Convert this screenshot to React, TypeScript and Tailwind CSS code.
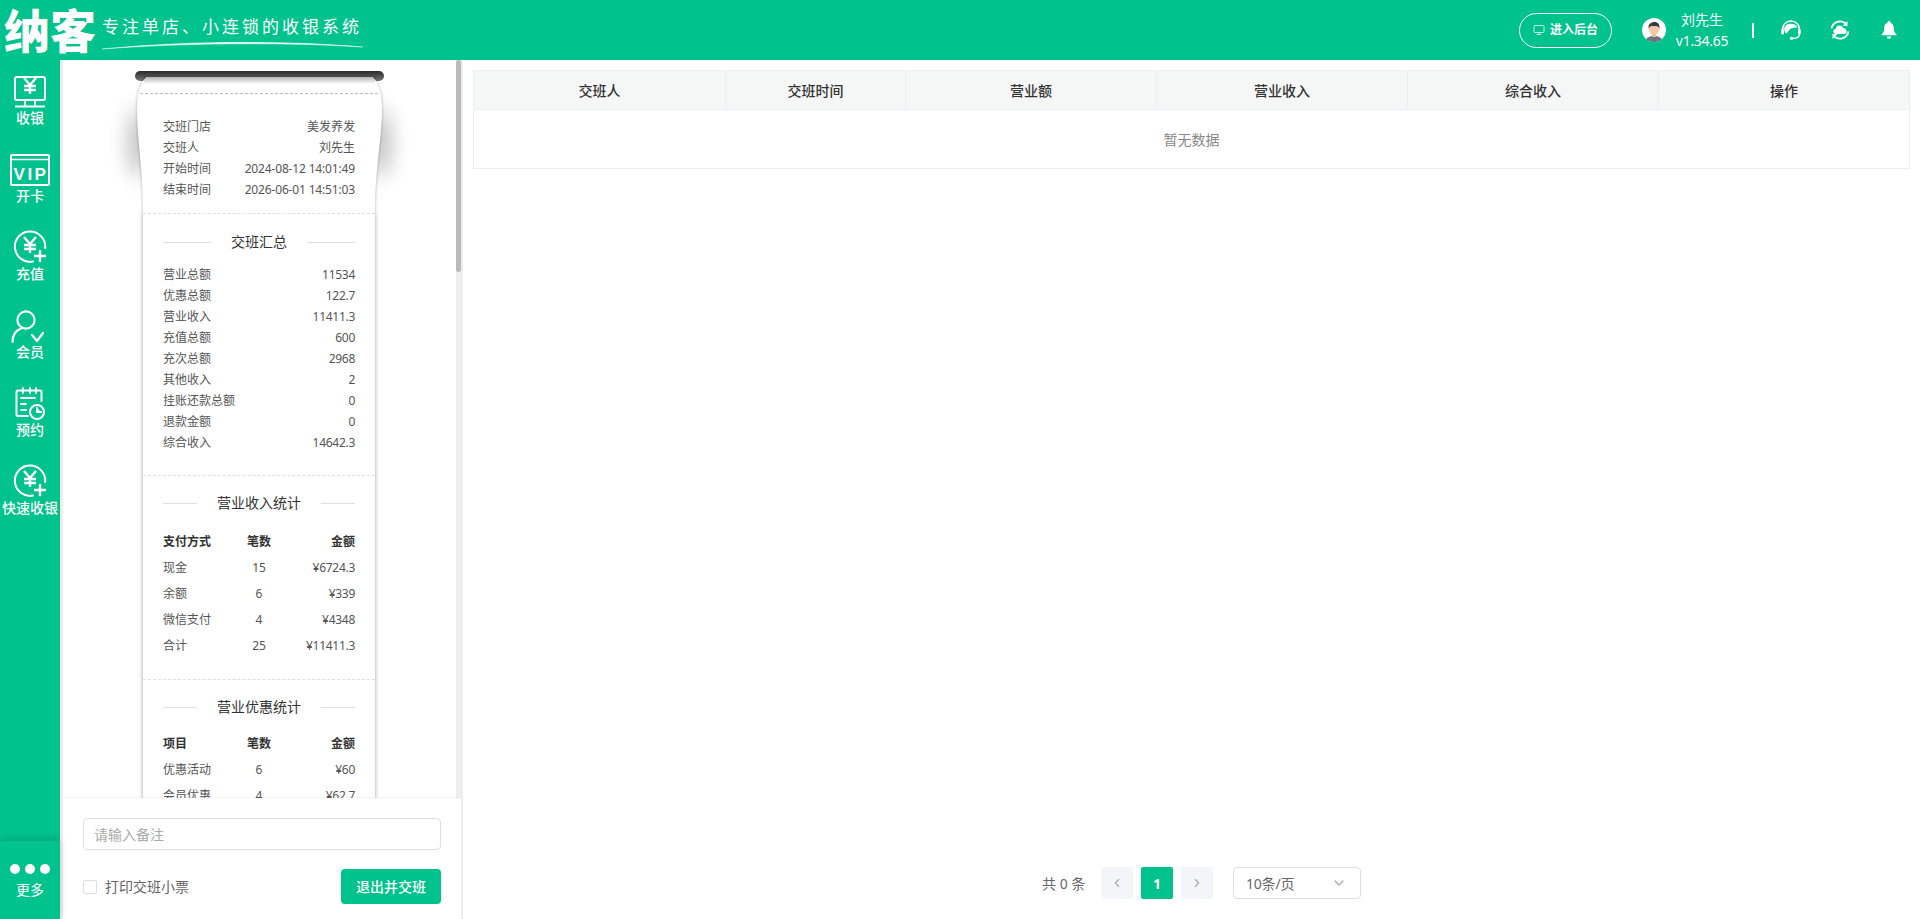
import React from "react";
import { ChevronDown, ChevronLeft, ChevronRight, Monitor } from "lucide-react";

const S = { fill: "none", stroke: "#fff", strokeWidth: 2, strokeLinecap: "round" as const, strokeLinejoin: "round" as const };

function Yen({ cx, cy }: { cx: number; cy: number }) {
  return (
    <path
      {...S}
      strokeWidth={2.4}
      strokeLinecap="butt"
      d={`M${cx - 6} ${cy - 8}L${cx} ${cy - 1}L${cx + 6} ${cy - 8}M${cx} ${cy - 1}V${cy + 8}M${cx - 6} ${cy}H${cx + 6}M${cx - 6} ${cy + 4}H${cx + 6}`}
    />
  );
}

function IcoCash() {
  return (
    <svg width="60" height="36" viewBox="0 0 60 36">
      <rect x="15" y="3" width="30" height="23" rx="2" {...S} />
      <g transform="translate(0 -1)"><Yen cx={30} cy={13} /></g>
      <path {...S} strokeLinecap="butt" d="M25 26v6M35 26v6M15 32.500h30" />
    </svg>
  );
}
function IcoVip() {
  return (
    <svg width="60" height="36" viewBox="0 0 60 36">
      <rect x="11" y="3" width="38" height="30" rx="1" {...S} />
      <path {...S} d="M11 7.500h38" strokeWidth={1.6} />
      <text x="31" y="27.500" textAnchor="middle" fill="#fff" fontSize="17" fontWeight="700" letterSpacing="2.500" fontFamily="Liberation Sans, sans-serif">VIP</text>
    </svg>
  );
}
function IcoCharge() {
  return (
    <svg width="60" height="36" viewBox="0 0 60 36">
      <path {...S} d="M33 31.600A15.200 15.200 0 1 1 45.200 18" />
      <Yen cx={30} cy={15} />
      <path {...S} strokeWidth={2.4} strokeLinecap="butt" d="M34 26h12M40 20v12" />
    </svg>
  );
}
function IcoMember() {
  return (
    <svg width="60" height="36" viewBox="0 0 60 36">
      <circle cx="26" cy="12" r="8.600" {...S} strokeWidth={2.2} />
      <path {...S} strokeWidth={2.2} d="M12.500 34c0-7 3.500-11.500 8.500-13.500" />
      <path {...S} strokeWidth={2.2} d="M32 27l5 6 6-8" />
    </svg>
  );
}
function IcoBook() {
  return (
    <svg width="60" height="36" viewBox="0 0 60 36">
      <path {...S} d="M28 30H18a1.500 1.500 0 0 1-1.500-1.500V6a1.500 1.500 0 0 1 1.500-1.500h22A1.500 1.500 0 0 1 41.500 6v9" />
      <path {...S} d="M23 2v5M30 2v5M36 2v5M21 12h14M21 18h5M21 24h5" strokeWidth={1.8} />
      <circle cx="37" cy="26" r="7" {...S} />
      <path {...S} fill="#fff" d="M37 22v4h4" />
    </svg>
  );
}

function Item({ icon, label }: { icon: React.ReactNode; label: string }) {
  return (
    <div className="flex h-[78px] flex-col items-center text-white">
      <div className="h-[34px] w-[60px]">{icon}</div>
      <div className="h-5 whitespace-nowrap text-center text-[14px] leading-5 font-medium">{label}</div>
    </div>
  );
}

const isNum = (s: string) => /^[\d¥.\-: ]+$/.test(s);

function InfoRow({ a, b }: { a: string; b: string }) {
  const tracking = !isNum(b) ? "" : b.length > 10 ? "tracking-[-0.16px]" : "tracking-[-0.28px]";
  return (
    <div className="flex h-[21px] items-center justify-between text-[12px] leading-[21px] text-[#555]">
      <span>{a}</span>
      <span className={tracking}>{b}</span>
    </div>
  );
}

function Title({ children }: { children: string }) {
  return (
    <div className="flex h-5 items-center gap-5">
      <div className="h-px flex-1 bg-[#dcdee2]" />
      <div className="text-[14px] leading-5 text-[#333]">{children}</div>
      <div className="h-px flex-1 bg-[#dcdee2]" />
    </div>
  );
}

function StatRow({ c, head }: { c: [string, string, string]; head?: boolean }) {
  return (
    <div className={`grid h-[26px] grid-cols-3 items-center text-[12px] ${head ? "font-bold text-[#333]" : "text-[#555]"}`}>
      <span>{c[0]}</span>
      <span className="text-center">{c[1]}</span>
      <span className={isNum(c[2]) ? "text-right tracking-[-0.28px]" : "text-right"}>{c[2]}</span>
    </div>
  );
}

const summary: [string, string][] = [
  ["营业总额", "11534"],
  ["优惠总额", "122.7"],
  ["营业收入", "11411.3"],
  ["充值总额", "600"],
  ["充次总额", "2968"],
  ["其他收入", "2"],
  ["挂账还款总额", "0"],
  ["退款金额", "0"],
  ["综合收入", "14642.3"],
];

function PaperTop() {
  const shape = "M11 0C4 8 2 18 2 32C2 62 8 92 8 136H240C240 92 247 62 247 32C247 18 245 8 238 0Z";
  return (
    <svg className="absolute left-0 top-0 overflow-visible" width="249" height="136" viewBox="0 0 249 136">
      <defs>
        <filter id="blur" filterUnits="userSpaceOnUse" x="-70" y="-30" width="390" height="220">
          <feGaussianBlur stdDeviation="11" />
        </filter>
        <filter id="edge" filterUnits="userSpaceOnUse" x="-20" y="-10" width="290" height="160">
          <feGaussianBlur stdDeviation="1.600" />
        </filter>
        <clipPath id="topclip">
          <rect x="-30" y="-10" width="310" height="146" />
        </clipPath>
        <linearGradient id="under" x1="0" y1="0" x2="0" y2="1">
          <stop offset="0" stopColor="#000" stopOpacity="0.3" />
          <stop offset="1" stopColor="#000" stopOpacity="0" />
        </linearGradient>
      </defs>
      <ellipse cx="4" cy="66" rx="7" ry="34" fill="#000" opacity="0.4" filter="url(#blur)" />
      <ellipse cx="245" cy="66" rx="7" ry="34" fill="#000" opacity="0.4" filter="url(#blur)" />
      <g clipPath="url(#topclip)">
        <path d={shape} fill="#000" opacity="0.32" filter="url(#edge)" />
      </g>
      <path d={shape} fill="#fff" />
      <rect x="9" y="0" width="231" height="7" fill="url(#under)" />
      <path d="M5 16.500H245" stroke="#bbb" strokeWidth="1" strokeDasharray="3 2" />
    </svg>
  );
}

function Receipt() {
  return (
    <div className="relative ml-[72px] w-[249px]">
      <div className="relative z-20 h-[10px] w-[249px] rounded-full bg-gradient-to-b from-[#2a2a2a] to-[#777]" />
      <div className="relative z-30 -mt-[4px] h-[136px]">
        <PaperTop />
        <div className="relative ml-[28px] w-[192px] pt-[39px]">
          <InfoRow a="交班门店" b="美发养发" />
          <InfoRow a="交班人" b="刘先生" />
          <InfoRow a="开始时间" b="2024-08-12 14:01:49" />
          <InfoRow a="结束时间" b="2026-06-01 14:51:03" />
        </div>
      </div>
      <div className="relative z-0 ml-2 w-[232px] bg-white shadow-[0_0_4px_rgba(0,0,0,0.4)]">
        <div className="border-t border-dashed border-[#dcdee2] px-5 pb-[22px] pt-[18px]">
          <Title>交班汇总</Title>
          <div className="mt-3">
            {summary.map(([a, b]) => (
              <InfoRow key={a} a={a} b={b} />
            ))}
          </div>
        </div>
        <div className="border-t border-dashed border-[#dcdee2] px-5 pb-5 pt-[17px]">
          <Title>营业收入统计</Title>
          <div className="mt-4">
            <StatRow head c={["支付方式", "笔数", "金额"]} />
            <StatRow c={["现金", "15", "¥6724.3"]} />
            <StatRow c={["余额", "6", "¥339"]} />
            <StatRow c={["微信支付", "4", "¥4348"]} />
            <StatRow c={["合计", "25", "¥11411.3"]} />
          </div>
        </div>
        <div className="border-t border-dashed border-[#dcdee2] px-5 pb-5 pt-[17px]">
          <Title>营业优惠统计</Title>
          <div className="mt-[14px]">
            <StatRow head c={["项目", "笔数", "金额"]} />
            <StatRow c={["优惠活动", "6", "¥60"]} />
            <StatRow c={["会员优惠", "4", "¥62.7"]} />
          </div>
        </div>
      </div>
    </div>
  );
}

function Avatar() {
  return (
    <svg width="24" height="24" viewBox="0 0 24 24">
      <defs>
        <clipPath id="av"><circle cx="12" cy="12" r="12" /></clipPath>
      </defs>
      <circle cx="12" cy="12" r="12" fill="#fff" />
      <g clipPath="url(#av)">
        <path d="M3 25c0-5 4-7 9-7s9 2 9 7z" fill="#6b7280" />
        <rect x="10" y="14" width="4" height="5" fill="#eab796" />
        <ellipse cx="12" cy="11" rx="5" ry="6" fill="#f3c6a5" />
        <path d="M6.500 11C6 6 9 4 12.500 4S18 6.500 17.500 11C17 8.500 15.500 8 12 8S7 8.500 6.500 11z" fill="#3a3a3a" />
      </g>
    </svg>
  );
}
function Headset() {
  return (
    <svg width="20" height="20" viewBox="0 0 20 20" fill="#fff">
      <path d="M1.500 9.500a8.500 8.500 0 0 1 17 0" fill="none" stroke="#fff" strokeWidth="1.600" />
      <path d="M3.200 8.500C4 5.200 7 3.800 10 3.800s5.600 1.300 6.400 4C14 7.200 11 8 8.800 9.500 7.500 10.500 6.500 13 5.500 13.500 3.800 13 3 10.500 3.200 8.500z" />
      <rect x="0.300" y="9" width="2.700" height="5.500" rx="1.300" />
      <rect x="17" y="9" width="2.700" height="5.500" rx="1.300" />
      <path d="M18.500 14c0 2.800-3 4.500-7 4.500" fill="none" stroke="#fff" strokeWidth="1.400" />
      <circle cx="10.500" cy="18.300" r="1.600" />
    </svg>
  );
}
function CloudSync() {
  return (
    <svg width="20" height="20" viewBox="0 0 20 20">
      <path d="M1.500 8.500A8.800 8.800 0 0 1 15.500 3.200" fill="none" stroke="#fff" strokeWidth="1.800" />
      <path d="M18.500 11.500A8.800 8.800 0 0 1 4.500 16.800" fill="none" stroke="#fff" strokeWidth="1.800" />
      <path d="M17.500 1v5h-5zM2.500 19v-5h5z" fill="#fff" />
      <path d="M6 14a2.500 2.500 0 0 1-.3-5 4 4 0 0 1 7.700-.800A2.900 2.900 0 0 1 14 14z" fill="#fff" />
    </svg>
  );
}
function Bell() {
  return (
    <svg width="16" height="18" viewBox="0 0 16 18" fill="#fff">
      <circle cx="8" cy="1.500" r="1.400" />
      <path d="M8 1.500c3.300 0 4.800 2.500 4.800 5.500 0 3.200.7 4.800 2.700 6.500v.8H.5v-.8C2.500 11.800 3.200 10.200 3.200 7c0-3 1.500-5.500 4.800-5.500z" />
      <path d="M5.800 15.500h4.400a2.200 2.200 0 0 1-4.400 0z" />
    </svg>
  );
}

const cols = ["交班人", "交班时间", "营业额", "营业收入", "综合收入", "操作"];

export default function App() {
  return (
    <div className="flex h-[919px] w-[1920px] flex-col overflow-hidden bg-white font-[Noto_Sans,Noto_Sans_CJK_SC,sans-serif]">
      <header className="flex h-[60px] shrink-0 items-center bg-[#00c28c] text-white">
        <span className="ml-[4px] w-[98px] whitespace-nowrap text-[46px] leading-none font-black">纳客</span>
        <div className="relative h-[60px] w-[262px]">
          <div className="whitespace-nowrap pt-[15px] text-[17px] leading-6 tracking-[3px]">专注单店、小连锁的收银系统</div>
          <svg className="absolute left-0 top-[38px]" width="262" height="12" viewBox="0 0 262 12">
            <path d="M0 11C80 3 180 2 261 9C180 4 80 5 0 11Z" fill="#fff" stroke="#fff" strokeWidth="0.400" />
          </svg>
        </div>
        <div className="ml-auto flex items-center">
          <div className="flex h-[35px] w-[93px] items-center justify-center gap-[5px] rounded-full border border-white text-[12px] font-bold">
            <Monitor size={12} strokeWidth={1.5} />
            <span>进入后台</span>
          </div>
          <div className="ml-[30px]"><Avatar /></div>
          <div className="ml-[6px] flex w-[60px] flex-col items-center text-[14px] leading-[21px]">
            <span>刘先生</span>
            <span className="whitespace-nowrap tracking-[-0.3px]">v1.34.65</span>
          </div>
          <div className="ml-5 h-[15px] w-[2px] bg-white" />
          <div className="ml-[27px]"><Headset /></div>
          <div className="ml-[29px]"><CloudSync /></div>
          <div className="ml-[31px] mr-[23px]"><Bell /></div>
        </div>
      </header>
      <div className="flex min-h-0 flex-1">
        <aside className="flex w-[60px] shrink-0 flex-col justify-between bg-[#00c28c]">
          <div className="pt-[14px]">
            <Item icon={<IcoCash />} label="收银" />
            <Item icon={<IcoVip />} label="开卡" />
            <Item icon={<IcoCharge />} label="充值" />
            <Item icon={<IcoMember />} label="会员" />
            <Item icon={<IcoBook />} label="预约" />
            <Item icon={<IcoCharge />} label="快速收银" />
          </div>
          <div className="relative z-30 flex h-[78px] flex-col items-center bg-[#00c28c] pt-[23px] text-white shadow-[0_-1px_8px_rgba(0,0,0,0.18)]">
            <div className="flex gap-[5px]">
              <span className="h-[10px] w-[10px] rounded-full bg-white" />
              <span className="h-[10px] w-[10px] rounded-full bg-white" />
              <span className="h-[10px] w-[10px] rounded-full bg-white" />
            </div>
            <div className="mt-[6px] text-[14px] leading-5">更多</div>
          </div>
        </aside>
        <section className="flex w-[403px] shrink-0 flex-col border-l-[3px] border-r-2 border-[#eeeeee]">
          <div className="flex min-h-0 flex-1">
            <div className="min-w-0 flex-1 overflow-hidden pt-[11px]">
              <Receipt />
            </div>
            <div className="w-[5px] shrink-0 bg-[#eeeeee]">
              <div className="h-[212px] rounded-full bg-[#bbbbbb]" />
            </div>
          </div>
          <div className="relative z-10 h-[121px] shrink-0 bg-white px-5 pt-5 shadow-[0_-1px_1px_rgba(0,0,0,0.04)]">
            <div className="flex h-8 items-center rounded border border-[#dcdee2] px-[10px] text-[14px] text-[#aaaaaa]">请输入备注</div>
            <div className="mt-[19px] flex h-[35px] items-center justify-between">
              <div className="flex items-center gap-2">
                <span className="h-[14px] w-[14px] rounded-[2px] border border-[#dcdee2]" />
                <span className="text-[14px] text-[#666]">打印交班小票</span>
              </div>
              <div className="flex h-[35px] w-[100px] items-center justify-center rounded bg-[#00c28c] text-[14px] font-medium text-white">退出并交班</div>
            </div>
          </div>
        </section>
        <main className="flex min-w-0 flex-1 flex-col px-[10px] pb-5 pt-[10px]">
          <div className="border border-[#ebeef5]">
            <div className="grid h-[39px] grid-cols-[252px_180px_251px_251px_251px_1fr] border-b border-[#ebeef5] bg-[#f5f7f7]">
              {cols.map((c, i) => (
                <div key={c} className={`flex items-center justify-center text-[14px] font-medium text-[#333] ${i < 5 ? "border-r border-[#ebeef5]" : ""}`}>
                  {c}
                </div>
              ))}
            </div>
            <div className="flex h-[58px] items-center justify-center text-[14px] text-[#888]">暂无数据</div>
          </div>
          <div className="mt-auto ml-[569px] flex h-8 items-center">
            <span className="w-[42px] whitespace-nowrap text-[14px] text-[#666]">共 0 条</span>
            <div className="ml-[17px] flex h-8 w-8 items-center justify-center rounded-[2px] bg-[#f4f5f9] text-[#aaa]"><ChevronLeft size={14} /></div>
            <div className="ml-2 flex h-8 w-8 items-center justify-center rounded-[2px] bg-[#00c28c] text-[14px] font-bold text-white">1</div>
            <div className="ml-2 flex h-8 w-8 items-center justify-center rounded-[2px] bg-[#f4f5f9] text-[#aaa]"><ChevronRight size={14} /></div>
            <div className="ml-5 flex h-8 w-[128px] items-center justify-between rounded border border-[#dcdee2] pl-3 pr-[13px] text-[14px] text-[#666]">
              <span className="tracking-[-0.2px]">10条/页</span>
              <ChevronDown size={16} className="text-[#aaa]" />
            </div>
          </div>
        </main>
      </div>
    </div>
  );
}
